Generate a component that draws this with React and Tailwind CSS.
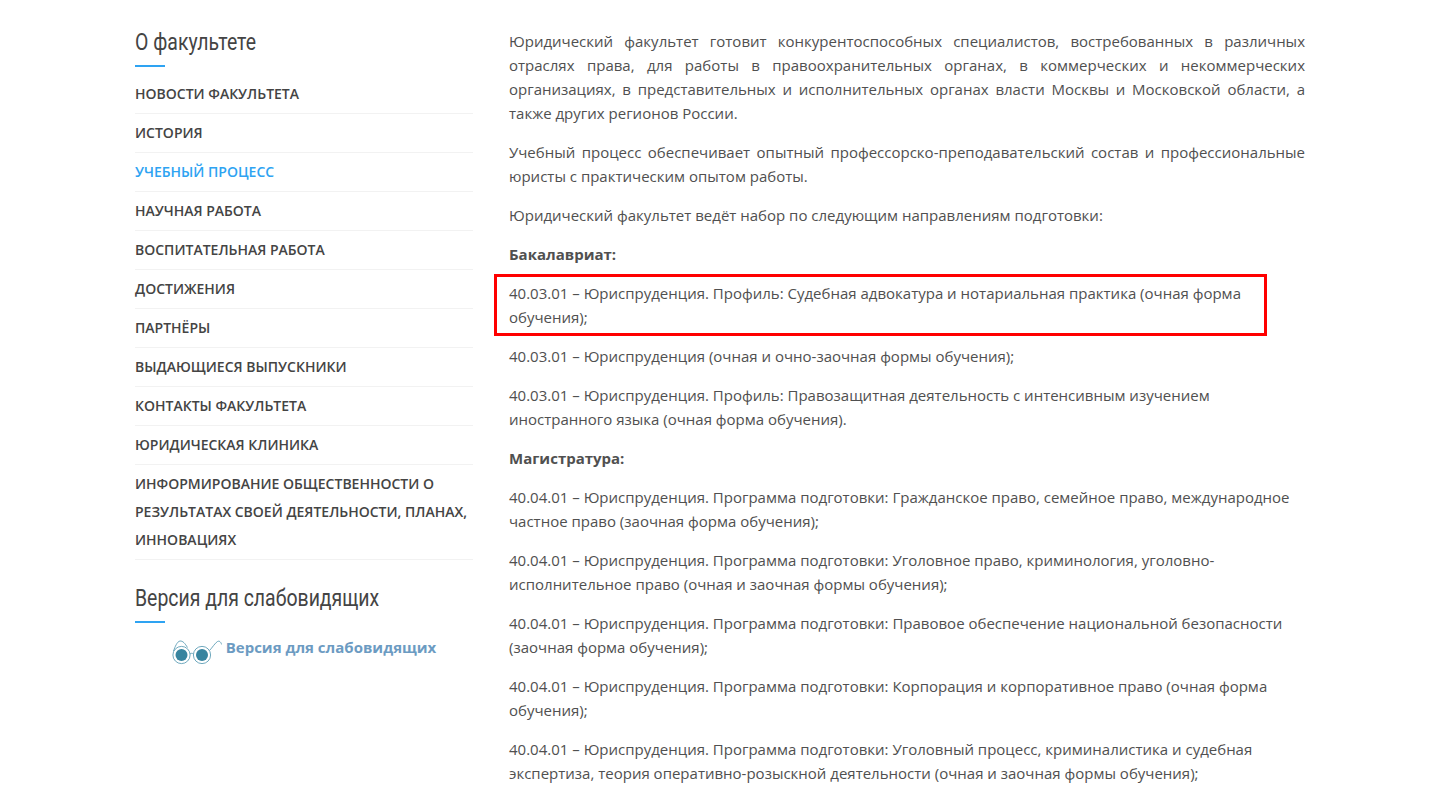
const items = [
  "Новости факультета",
  "История",
  "Учебный процесс",
  "Научная работа",
  "Воспитательная работа",
  "Достижения",
  "Партнёры",
  "Выдающиеся выпускники",
  "Контакты факультета",
  "Юридическая клиника",
  "Информирование общественности о результатах своей деятельности, планах, инновациях",
];

const bachelor = [
  "40.03.01 – Юриспруденция (очная и очно-заочная формы обучения);",
  "40.03.01 – Юриспруденция. Профиль: Правозащитная деятельность с интенсивным изучением иностранного языка (очная форма обучения).",
];

const master = [
  "40.04.01 – Юриспруденция. Программа подготовки: Гражданское право, семейное право, международное частное право (заочная форма обучения);",
  "40.04.01 – Юриспруденция. Программа подготовки: Уголовное право, криминология, уголовно-исполнительное право (очная и заочная формы обучения);",
  "40.04.01 – Юриспруденция. Программа подготовки: Правовое обеспечение национальной безопасности (заочная форма обучения);",
  "40.04.01 – Юриспруденция. Программа подготовки: Корпорация и корпоративное право (очная форма обучения);",
  "40.04.01 – Юриспруденция. Программа подготовки: Уголовный процесс, криминалистика и судебная экспертиза, теория оперативно-розыскной деятельности (очная и заочная формы обучения);",
];

function Heading({ children }) {
  return (
    <div>
      <h3 className="font-['Roboto',sans-serif] text-[24px] leading-[26px] font-normal text-[#444] origin-left scale-x-[0.81] whitespace-nowrap">
        {children}
      </h3>
      <div className="mt-[10px] w-[30px] h-[2px] bg-[#2ea3f2]" />
    </div>
  );
}

function Glasses() {
  return (
    <svg className="mt-[5px] shrink-0" width="50" height="26" viewBox="0 0 50 26" fill="none" stroke="#4b93ad" strokeWidth="0.8">
      <circle cx="9.5" cy="15" r="8.6" />
      <circle cx="9.5" cy="15" r="6" fill="#37849f" stroke="none" />
      <circle cx="30" cy="15" r="8.6" />
      <circle cx="30" cy="15" r="6" fill="#37849f" stroke="none" />
      <path d="M18 14 C19.5 13 20 13 21.5 14" />
      <path d="M1.5 11 C3 7 5 1.5 8 1 C11 0.8 13 3.5 15.5 7.5" />
      <path d="M37.5 10.5 C40 8 43 3 45.5 1.5 C47.5 0.5 48.8 2 49.7 4.5" />
    </svg>
  );
}

export default function App() {
  return (
    <div className="h-[807px] overflow-hidden bg-white font-['Open_Sans',sans-serif] text-[15px] leading-[24px] text-[#505050]">
      <div className="flex pt-[29px] pl-[135px]">
        <aside className="w-[338px] shrink-0">
          <Heading>О факультете</Heading>
          <ul className="mt-[8px]">
            {items.map((t, i) => (
              <li
                key={t}
                className={`py-[5px] border-b border-[#f2f2f2] text-sm leading-[28px] font-semibold uppercase ${i === 2 ? "text-[#2ea3f2]" : "text-[#444]"}`}
              >
                {t}
              </li>
            ))}
          </ul>
          <div className="mt-[25px]">
            <Heading>Версия для слабовидящих</Heading>
          </div>
          <div className="mt-[12px] flex items-start justify-center gap-[4px]">
            <Glasses />
            <span className="text-[15px] leading-[24px] font-bold text-[#6c9bc2]">Версия для слабовидящих</span>
          </div>
        </aside>
        <main className="ml-[36px] w-[796px] shrink-0 flex flex-col gap-[15px]">
          <p className="text-justify">
            Юридический факультет готовит конкурентоспособных специалистов, востребованных в различных отраслях права, для работы в правоохранительных органах, в коммерческих и некоммерческих организациях, в представительных и исполнительных органах власти Москвы и Московской области, а также других регионов России.
          </p>
          <p className="text-justify">
            Учебный процесс обеспечивает опытный профессорско-преподавательский состав и профессиональные юристы с практическим опытом работы.
          </p>
          <p>Юридический факультет ведёт набор по следующим направлениям подготовки:</p>
          <p className="font-bold">Бакалавриат:</p>
          <p className="relative">
            40.03.01 – Юриспруденция. Профиль: Судебная адвокатура и нотариальная практика (очная форма обучения);
            <span className="absolute -left-[15px] -top-[7px] w-[773px] h-[62px] border-[3px] border-[#ff0000]" />
          </p>
          {bachelor.map((t) => <p key={t}>{t}</p>)}
          <p className="font-bold">Магистратура:</p>
          {master.map((t) => <p key={t}>{t}</p>)}
        </main>
      </div>
    </div>
  );
}
